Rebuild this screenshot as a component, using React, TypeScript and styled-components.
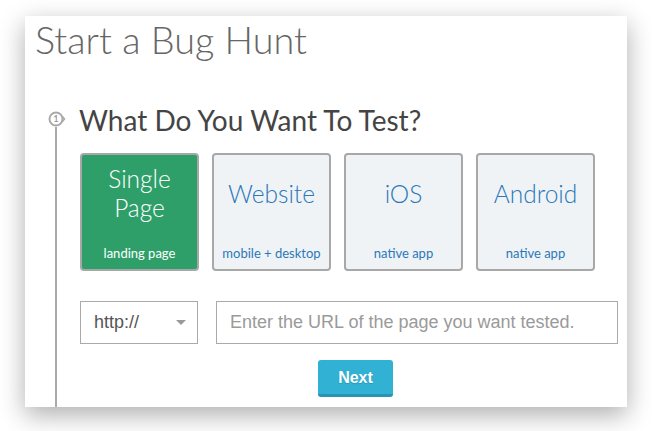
import React from "react";
import styled, { createGlobalStyle } from "styled-components";

const Global = createGlobalStyle`
  html, body { margin: 0; padding: 0; background: #fff; overflow: hidden; }
  * { box-sizing: border-box; }
`;

const Page = styled.div`
  width: 652px;
  height: 431px;
  padding: 16px 25px 0 25px;
  overflow: hidden;
`;

const Card = styled.div`
  width: 602px;
  height: 391px;
  background: #fff;
  box-shadow: 0 8px 24px rgba(0, 0, 0, 0.32);
  display: flex;
  flex-direction: column;
`;

const Title = styled.h1`
  margin: 0;
  padding: 4px 0 0 10px;
  font-family: Lato, "Open Sans", sans-serif;
  font-weight: 300;
  font-size: 37.8px;
  line-height: 40px;
  color: #666;
`;

const Step = styled.div`
  flex: 1;
  display: flex;
  gap: 15px;
  padding: 43px 0 0 23px;
`;

const Rail = styled.div`
  width: 16px;
  display: flex;
  flex-direction: column;
  align-items: center;
  padding-top: 8px;
`;

const Marker = styled.svg`
  display: block;
  overflow: visible;
  flex: none;
`;

const Line = styled.div`
  flex: 1;
  width: 2px;
  background: #aaa;
`;

const Content = styled.div`
  display: flex;
  flex-direction: column;
`;

const Heading = styled.h2`
  margin: 0;
  font-family: Lato, "Open Sans", sans-serif;
  font-weight: 400;
  font-size: 28px;
  line-height: 34px;
  color: #444;
`;

const Tiles = styled.div`
  display: flex;
  gap: 13px;
  margin-top: 16px;
  padding-left: 1px;
`;

const Tile = styled.div<{ $active?: boolean }>`
  width: 119px;
  height: 118px;
  border: 2px solid #a8a8a8;
  border-radius: 4px;
  background: ${(p) => (p.$active ? "#2e9f69" : "#eff3f5")};
  color: ${(p) => (p.$active ? "#fff" : "#2b78b9")};
  display: flex;
  flex-direction: column;
  font-family: Lato, "Open Sans", sans-serif;
  text-align: center;
`;

const TileLabel = styled.div`
  flex: 1;
  display: flex;
  align-items: center;
  justify-content: center;
  padding-bottom: 14px;
  font-weight: 300;
  font-size: 24.5px;
  line-height: 29px;
`;

const TileSub = styled.div`
  font-weight: 400;
  font-size: 13px;
  line-height: 16px;
  padding-bottom: 8px;
  white-space: nowrap;
`;

const Fields = styled.div`
  display: flex;
  gap: 18px;
  margin-top: 30px;
  padding-left: 1px;
`;

const Select = styled.div`
  width: 118px;
  height: 43px;
  border: 1px solid #aaa;
  display: flex;
  align-items: center;
  justify-content: space-between;
  padding: 0 11px 0 13px;
  font-family: "Liberation Sans", Arial, sans-serif;
  font-size: 18px;
  color: #555;
  background: #fff;
`;

const Caret = styled.span`
  width: 0;
  height: 0;
  border-left: 5px solid transparent;
  border-right: 5px solid transparent;
  border-top: 5px solid #999;
`;

const UrlInput = styled.input`
  width: 402px;
  height: 43px;
  border: 1px solid #aaa;
  border-radius: 0;
  padding: 0 13px;
  font-family: "Liberation Sans", Arial, sans-serif;
  font-size: 18px;
  color: #555;
  outline: none;
  &::placeholder { color: #9a9a9a; }
`;

const Actions = styled.div`
  display: flex;
  margin-top: 16px;
  padding-left: 239px;
`;

const NextButton = styled.button`
  width: 75px;
  height: 37px;
  border: none;
  border-bottom: 3px solid #2893b3;
  border-radius: 3px;
  background: #31b1d4;
  color: #fff;
  font-family: "Liberation Sans", Arial, sans-serif;
  font-weight: 700;
  font-size: 16px;
  padding: 2px 0 0 0;
  text-shadow: 0 1px 1px rgba(0, 0, 0, 0.15);
`;

const tiles = [
  { label: ["Single", "Page"], sub: "landing page", active: true },
  { label: ["Website"], sub: "mobile + desktop" },
  { label: ["iOS"], sub: "native app" },
  { label: ["Android"], sub: "native app" },
];

export default function App() {
  return (
    <>
      <Global />
      <Page>
        <Card>
          <Title>Start a Bug Hunt</Title>
          <Step>
            <Rail>
              <Marker width="16" height="16" viewBox="0 0 16 16">
                <circle cx="8" cy="8" r="6.5" fill="#fff" stroke="#aaa" strokeWidth="2" />
                <path d="M14.2 5.2 L16.5 8 L14.2 10.8" fill="none" stroke="#aaa" strokeWidth="1.6" />
                <text x="8" y="11" textAnchor="middle" fontSize="8.5" fontFamily="Lato, sans-serif" fontWeight="700" fill="#999">1</text>
              </Marker>
              <Line />
            </Rail>
            <Content>
              <Heading>What Do You Want To Test?</Heading>
              <Tiles>
                {tiles.map((t) => (
                  <Tile key={t.sub + t.label[0]} $active={t.active}>
                    <TileLabel>
                      <div>
                        {t.label.map((l) => (
                          <div key={l}>{l}</div>
                        ))}
                      </div>
                    </TileLabel>
                    <TileSub>{t.sub}</TileSub>
                  </Tile>
                ))}
              </Tiles>
              <Fields>
                <Select>
                  <span>http://</span>
                  <Caret />
                </Select>
                <UrlInput placeholder="Enter the URL of the page you want tested." />
              </Fields>
              <Actions>
                <NextButton>Next</NextButton>
              </Actions>
            </Content>
          </Step>
        </Card>
      </Page>
    </>
  );
}
